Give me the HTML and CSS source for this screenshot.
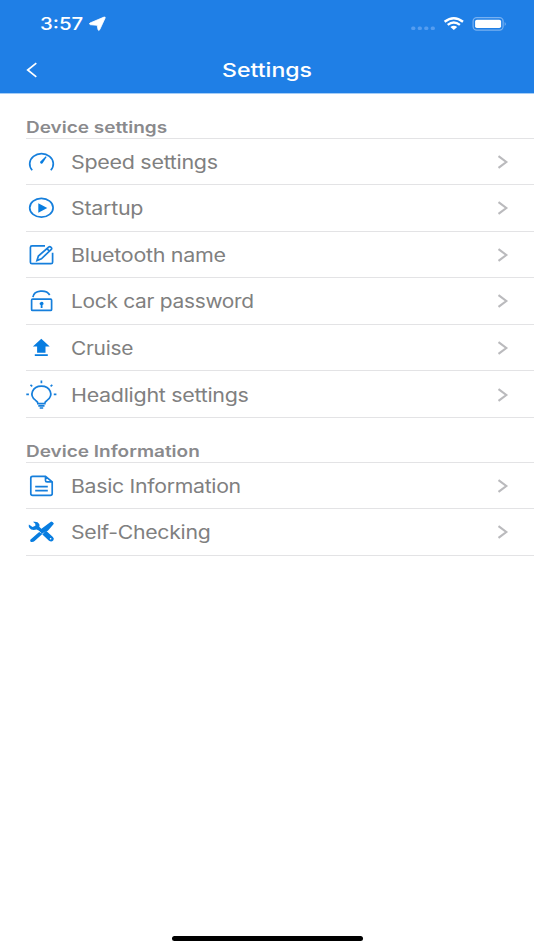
FILE: index.html
```html
<!DOCTYPE html>
<html lang="en">
<head>
<meta charset="utf-8">
<title>Settings</title>
<link rel="stylesheet" href="styles.css">
</head>
<body>
<svg class="defs" width="0" height="0"><symbol id="chevron" viewBox="0 0 12 14"><path d="M1.500 1.200 9.300 7l-7.800 5.800" fill="none" stroke="#bababd" stroke-width="2.100"/></symbol></svg>
<div class="screen">
  <header class="header">
    <div class="status">
      <span class="time"><span class="wide">3:57</span></span>
      <svg class="location" width="18" height="16" viewBox="0 0 18 16"><path d="M1 7 15 1.100q1.700-.4 1.100 1L10.700 13.700q-1.100 1.700-1.700-.2L8.200 9.300 1.400 8.700Q-.3 8 1 7Z" fill="#fff" stroke="#fff" stroke-width=".8"/></svg>
      <svg class="indicators" width="98" height="18" viewBox="0 0 98 18">
        <g fill="#559df0"><rect x="1.200" y="11.500" width="4.200" height="3.600" rx="1.500"/><rect x="7.700" y="11.500" width="4.200" height="3.600" rx="1.500"/><rect x="14.200" y="11.500" width="4.200" height="3.600" rx="1.500"/><rect x="20.700" y="11.500" width="4.200" height="3.600" rx="1.500"/></g>
        <g fill="none" stroke="#fff" stroke-width="2.400"><path d="M34.600 6.800q9.200-7.200 18.400 0"/><path d="M37.700 9.900q6.100-4.600 12.200 0"/></g>
        <path d="M40.400 11.900q3.400-2.400 6.800 0L43.800 15Z" fill="#fff"/>
        <rect x="63.100" y="2.700" width="30" height="12.400" rx="3.600" fill="none" stroke="#78b1f1" stroke-width="1.200"/>
        <rect x="65.100" y="4.700" width="26" height="8.400" rx="1.800" fill="#fff"/>
        <path d="M94.700 6.900q2.300 2 0 4.200Z" fill="#78b1f1"/>
      </svg>
    </div>
    <div class="nav">
      <svg class="back" width="14" height="16" viewBox="0 0 14 16"><path d="M11.300 1.200 2.700 8l8.600 6.800" fill="none" stroke="#fff" stroke-width="1.700"/></svg>
      <h1 class="title"><span class="wide">Settings</span></h1>
    </div>
  </header>
  <main>
    <section class="group">
      <h2 class="heading"><span class="wide">Device settings</span></h2>
      <ul class="list">
        <li class="row">
          <svg class="icon" viewBox="0 0 32 32"><path class="line" d="M7.200 24.200A11.800 10.200 0 1 1 25.800 24.200"/><path class="fill" d="m20.800 10.300.8.600-4 6.300a1.500 1.500 0 0 1-2.500-1.400Z"/></svg>
          <span class="label"><span class="wide">Speed settings</span></span><svg class="chevron"><use href="#chevron"/></svg>
        </li>
        <li class="row">
          <svg class="icon" viewBox="0 0 32 32"><ellipse class="line" cx="16.400" cy="15.800" rx="11.700" ry="9.400"/><path class="fill" d="m13.300 11.200 9 4.700-9 4.800Z"/></svg>
          <span class="label"><span class="wide">Startup</span></span><svg class="chevron"><use href="#chevron"/></svg>
        </li>
        <li class="row">
          <svg class="icon" viewBox="0 0 32 32"><path class="line" d="M20 6.900H7q-1.600 0-1.600 1.500v14.800q0 1.500 1.600 1.500h19q1.600 0 1.600-1.500v-9.500"/><path class="line" d="m12 21.500 1.400-4.500L23.800 8q1.100-.7 2.300.3 1.100 1.100.2 2.100L16.400 19.800ZM21.900 9.800l2.700 2.300"/></svg>
          <span class="label"><span class="wide">Bluetooth name</span></span><svg class="chevron"><use href="#chevron"/></svg>
        </li>
        <li class="row">
          <svg class="icon" viewBox="0 0 32 32"><rect class="line" x="6.600" y="14.200" width="20" height="11.200" rx="1"/><path class="line" d="M7.900 12.200C9 4.700 21.500 4.300 24.700 10"/><path class="fill" d="M14.600 18.800a2 1.700 0 1 1 2.900 1.300V23h-1.800v-2.900Q14.600 19.700 14.600 18.800Z"/></svg>
          <span class="label"><span class="wide tight">Lock car password</span></span><svg class="chevron"><use href="#chevron"/></svg>
        </li>
        <li class="row">
          <svg class="icon" viewBox="0 0 32 32"><path class="fill" d="m16.300 6.800 8.400 7.600h-4.200v6.300h-8.400v-6.300H7.900ZM9.800 22.200h13v1.900h-13Z"/></svg>
          <span class="label"><span class="wide tight">Cruise</span></span><svg class="chevron"><use href="#chevron"/></svg>
        </li>
        <li class="row">
          <svg class="icon" viewBox="0 0 32 32"><path class="line" d="M12.900 24.600q.1-1.800-2.200-3.200C3.500 16.400 7.500 7.100 16.400 7.100S29.200 16.400 22 21.400q-2.300 1.400-2.200 3.200Z"/><path class="line" d="M13.300 26.900h6.200M14.700 29h3.500M16.400 1.600v2.600M1.300 15.400h2.600M28.800 15.400h2.600M5.500 5.800l1.700 1.500M27.300 5.800l-1.700 1.500"/></svg>
          <span class="label"><span class="wide">Headlight settings</span></span><svg class="chevron"><use href="#chevron"/></svg>
        </li>
      </ul>
    </section>
    <section class="group">
      <h2 class="heading"><span class="wide">Device Information</span></h2>
      <ul class="list">
        <li class="row">
          <svg class="icon" viewBox="0 0 32 32"><path class="line" d="M20.500 6.300H7.700q-1.900 0-1.900 1.600v15.800q0 1.600 1.900 1.600h17.600q1.900 0 1.900-1.600V11.900ZM20.500 6.300v4.200q0 1.400 1.500 1.400h5.200M10.200 16.600h12.600M10.200 20.600h12.600"/></svg>
          <span class="label"><span class="wide snug">Basic Information</span></span><svg class="chevron"><use href="#chevron"/></svg>
        </li>
        <li class="row">
          <svg class="icon" viewBox="0 0 32 32"><path class="fill" d="M8 5.800q4.800-.8 6.200 2.200.6 1.400.1 2.700L19 15.400l2.400-.5 6.500 6.100q1.800 1.900.3 3.600-1.900 1.800-4.200.2l-6.600-6.200.3-1.600-6-3.400Q6.300 15 4.300 11.700 3.300 10 3.900 8.400l3.600 2.600 2.900-1.200-.1-2Z"/><path class="fill" d="M26.200 5.600q2 .3 2.700 2.200l-6 7-3.300 1.300-10 8.900q-1.200 1.200-3.400 1-1.600-.5-.9-2.200l10-8.700.8-2.200Z"/><path d="m13.300 14.900 3 2.300M18.900 16.500l-1.600 1.600" stroke="#fff" stroke-width=".7"/><circle cx="25.600" cy="22.700" r=".8" fill="#fff"/></svg>
          <span class="label"><span class="wide snug">Self-Checking</span></span><svg class="chevron"><use href="#chevron"/></svg>
        </li>
      </ul>
    </section>
  </main>
  <div class="home"></div>
</div>
</body>
</html>
```
FILE: styles.css
```css
* { box-sizing: border-box; }
body { margin: 0; background: #fff; font-family: Inter, "Liberation Sans", sans-serif; }
.defs { display: block; }
.screen { height: 950px; display: flex; flex-direction: column; overflow: hidden; }
.header { height: 94px; background: #1f7fe6; color: #fff; border-bottom: 1px solid #a5cdf6; }
.status { height: 48px; display: flex; align-items: center; padding: 0 26px 0 39.500px; }
.time { width: 49.500px; font-size: 17px; line-height: 22px; font-weight: 500; }
.indicators { margin-left: auto; }
.nav { height: 44px; display: grid; grid-template-columns: 48px 1fr 48px; align-items: center; }
.back { margin-left: 25px; }
.title { margin: 0; padding-top: 1px; text-align: center; font-size: 19px; line-height: 24px; font-weight: 500; }
.wide { display: inline-block; white-space: nowrap; transform: scaleX(1.160); transform-origin: left center; }
.time .wide { transform: scaleX(1.200); }
.title .wide { transform: scaleX(1.215); transform-origin: center; }
.group { padding-left: 26px; }
.heading { height: 44px; margin: 0; padding-top: 23px; font-size: 16px; line-height: 20px; font-weight: 600; color: #8a8a8d; }
.heading .wide { transform: scaleX(1.187); }
.list { margin: 0; padding: 0; list-style: none; border-top: 1px solid #e3e3e5; }
.row { height: 46.600px; display: flex; align-items: center; border-bottom: 1px solid #e3e3e5; padding: 1px 25px 0 0; }
.row:first-child { height: 46px; }
.group:first-child .row:first-child { padding-top: 0; }
.icon { width: 32px; height: 32px; margin-left: -1px; flex: none; }
.line { fill: none; stroke: #167fdc; stroke-width: 1.700; }
.fill { fill: #087de0; }
.label { flex: 1; margin-left: 13.600px; font-size: 18.500px; line-height: 24px; letter-spacing: -.25px; color: #808080; }
.tight { transform: scaleX(1.130); }
.snug { transform: scaleX(1.148); }
.chevron { width: 12px; height: 14px; }
.home { width: 191px; height: 5px; margin: auto auto 9px; border-radius: 3px; background: #000; }
```
